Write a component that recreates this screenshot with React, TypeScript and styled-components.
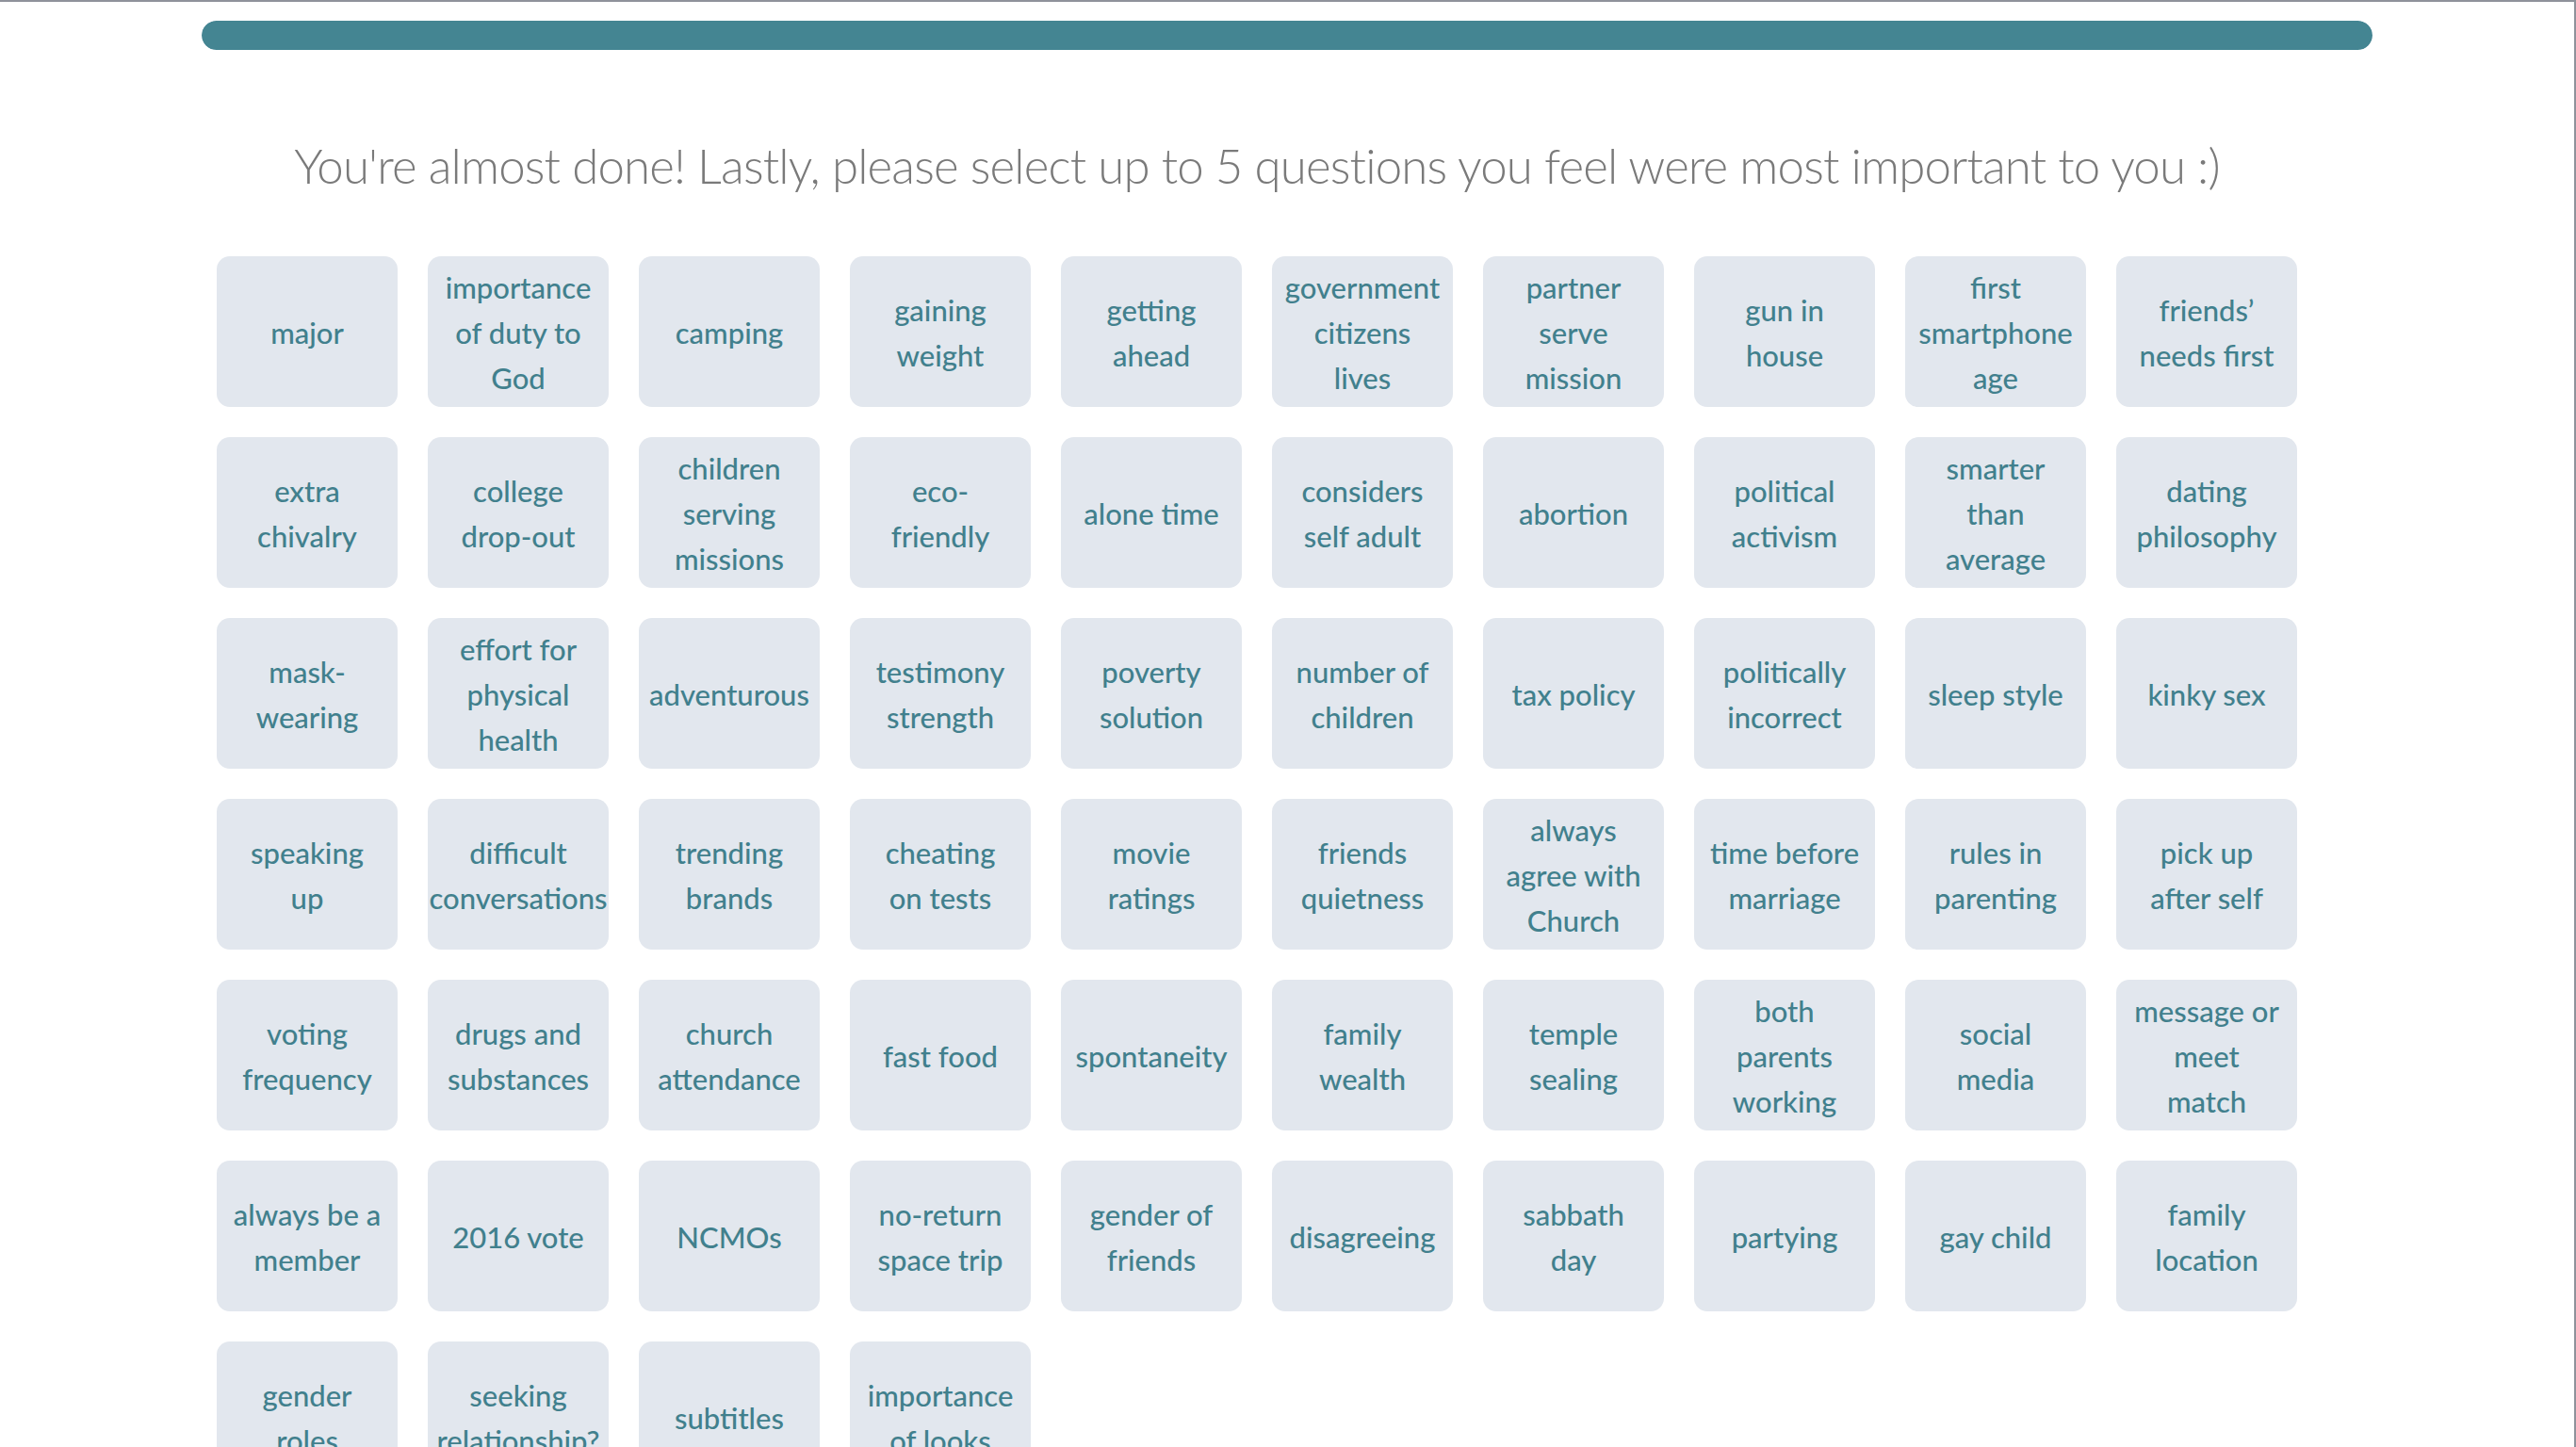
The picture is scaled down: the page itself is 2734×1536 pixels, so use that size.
import React from "react";
import styled, { createGlobalStyle } from "styled-components";

const GlobalStyle = createGlobalStyle`
  html, body {
    margin: 0;
    padding: 0;
    background: #ffffff;
  }
  * { box-sizing: border-box; }
`;

const Frame = styled.div`
  min-height: 100vh;
  border-top: 2px solid #8f929b;
  border-right: 2px solid #8f929b;
  background: #ffffff;
  overflow: hidden;
`;

const Container = styled.main`
  width: 2304px;
  margin: 0 auto;
  padding-top: 20px;
`;

const ProgressTrack = styled.div`
  height: 31px;
  border-radius: 16px;
  background: #e2e7ee;
  overflow: hidden;
`;

const ProgressFill = styled.div`
  height: 100%;
  border-radius: 16px;
  background: #448592;
`;

const Title = styled.h1`
  width: 2208px;
  margin: 91px 0 0 16px;
  text-align: center;
  white-space: nowrap;
  font-family: Lato, "Open Sans", sans-serif;
  font-weight: 300;
  font-size: 51px;
  letter-spacing: -0.85px;
  line-height: 64px;
  color: #7a7a7a;
`;

const Grid = styled.div`
  display: grid;
  grid-template-columns: repeat(10, 192px);
  grid-auto-rows: 160px;
  gap: 32px;
  padding: 0 16px;
  margin-top: 64px;
`;

const Tile = styled.button`
  display: flex;
  align-items: center;
  justify-content: center;
  padding: 2px 0 0;
  border: none;
  border-radius: 14px;
  background: #e2e7ee;
  cursor: pointer;
`;

const Label = styled.span`
  flex-shrink: 0;
  white-space: pre;
  font-family: Lato, "Open Sans", sans-serif;
  font-weight: 500;
  font-size: 31px;
  line-height: 48px;
  color: #41808d;
  text-align: center;
`;

const questions = [
  "major", "importance\nof duty to\nGod", "camping", "gaining\nweight", "getting\nahead",
  "government\ncitizens\nlives", "partner\nserve\nmission", "gun in\nhouse", "first\nsmartphone\nage", "friends\u2019\nneeds first",
  "extra\nchivalry", "college\ndrop-out", "children\nserving\nmissions", "eco-\nfriendly", "alone time",
  "considers\nself adult", "abortion", "political\nactivism", "smarter\nthan\naverage", "dating\nphilosophy",
  "mask-\nwearing", "effort for\nphysical\nhealth", "adventurous", "testimony\nstrength", "poverty\nsolution",
  "number of\nchildren", "tax policy", "politically\nincorrect", "sleep style", "kinky sex",
  "speaking\nup", "difficult\nconversations", "trending\nbrands", "cheating\non tests", "movie\nratings",
  "friends\nquietness", "always\nagree with\nChurch", "time before\nmarriage", "rules in\nparenting", "pick up\nafter self",
  "voting\nfrequency", "drugs and\nsubstances", "church\nattendance", "fast food", "spontaneity",
  "family\nwealth", "temple\nsealing", "both\nparents\nworking", "social\nmedia", "message or\nmeet\nmatch",
  "always be a\nmember", "2016 vote", "NCMOs", "no-return\nspace trip", "gender of\nfriends",
  "disagreeing", "sabbath\nday", "partying", "gay child", "family\nlocation",
  "gender\nroles", "seeking\nrelationship?", "subtitles", "importance\nof looks",
];

export default function App() {
  return (
    <>
      <GlobalStyle />
      <Frame>
        <Container>
          <ProgressTrack>
            <ProgressFill style={{ width: "100%" }} />
          </ProgressTrack>
          <Title>You're almost done! Lastly, please select up to 5 questions you feel were most important to you :)</Title>
          <Grid>
            {questions.map((q) => (
              <Tile key={q}>
                <Label>{q}</Label>
              </Tile>
            ))}
          </Grid>
        </Container>
      </Frame>
    </>
  );
}
